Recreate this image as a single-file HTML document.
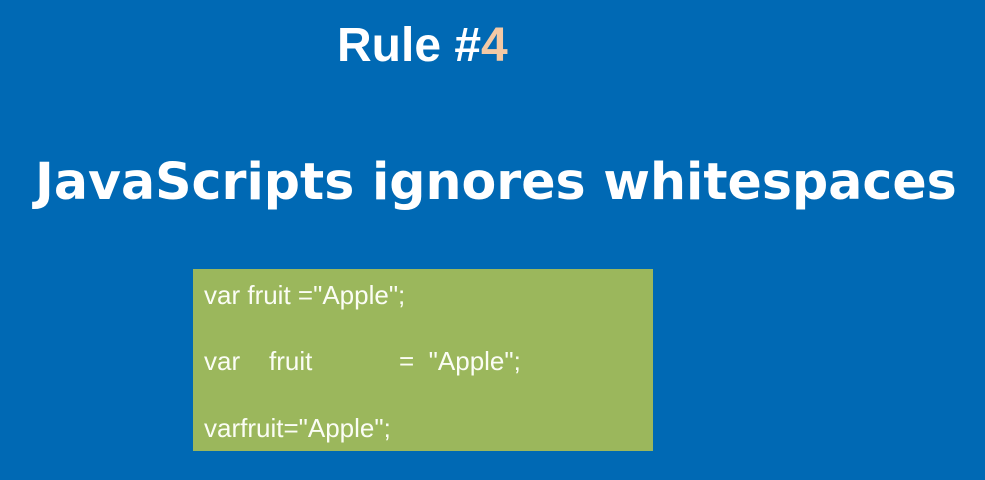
<!DOCTYPE html>
<html><head><style>
html,body{margin:0;padding:0}
body{width:985px;height:480px;background:#0069b4;position:relative;overflow:hidden;font-family:"Liberation Sans",sans-serif;color:#fff}
.rule{position:absolute;left:337px;top:18px;font-weight:bold;font-size:48px;line-height:56px;white-space:nowrap}
.rule span{color:#f3c9a5}
.h{position:absolute;left:35px;top:152px;font-family:"DejaVu Sans",sans-serif;font-weight:bold;font-size:50.6px;line-height:60px;white-space:nowrap}
.box{position:absolute;left:193px;top:269px;width:460px;height:182px;background:#9bb75c}
.l{position:absolute;left:11px;font-size:26px;line-height:30px;white-space:pre;color:#fbfdf5}
</style></head><body>
<div class="rule">Rule #<span>4</span></div>
<div class="h">JavaScripts ignores whitespaces</div>
<div class="box">
<div class="l" style="top:11px">var fruit ="Apple";</div>
<div class="l" style="top:77px">var    fruit            =  "Apple";</div>
<div class="l" style="top:144px">varfruit="Apple";</div>
</div>
</body></html>
